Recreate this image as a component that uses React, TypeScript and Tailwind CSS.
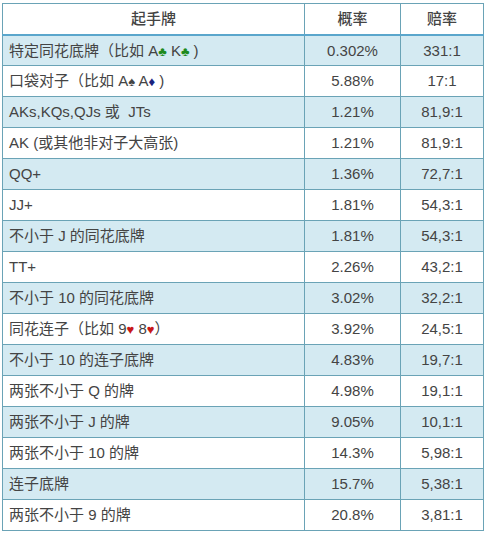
import React from 'react';

type Row = { hand: React.ReactNode; prob: string; odds: string };

const Club = () => <span className="text-[13px] text-[#1e8a1e]">♣</span>;
const Spade = () => <span className="text-[13px] text-[#444]">♠</span>;
const Diamond = () => <span className="text-[13px] text-[#1a237e]">♦</span>;
const Heart = () => <span className="text-[13px] text-[#c81818]">♥</span>;

const rows: Row[] = [
  {
    hand: (
      <>
        特定同花底牌（比如 A<Club /> K<Club /> )
      </>
    ),
    prob: '0.302%',
    odds: '331:1',
  },
  {
    hand: (
      <>
        口袋对子（比如 A<Spade /> A<Diamond /> )
      </>
    ),
    prob: '5.88%',
    odds: '17:1',
  },
  { hand: 'AKs,KQs,QJs 或  JTs', prob: '1.21%', odds: '81,9:1' },
  { hand: 'AK (或其他非对子大高张)', prob: '1.21%', odds: '81,9:1' },
  { hand: 'QQ+', prob: '1.36%', odds: '72,7:1' },
  { hand: 'JJ+', prob: '1.81%', odds: '54,3:1' },
  { hand: '不小于 J 的同花底牌', prob: '1.81%', odds: '54,3:1' },
  { hand: 'TT+', prob: '2.26%', odds: '43,2:1' },
  { hand: '不小于 10 的同花底牌', prob: '3.02%', odds: '32,2:1' },
  {
    hand: (
      <>
        同花连子（比如 9<Heart /> 8<Heart />）
      </>
    ),
    prob: '3.92%',
    odds: '24,5:1',
  },
  { hand: '不小于 10 的连子底牌', prob: '4.83%', odds: '19,7:1' },
  { hand: '两张不小于 Q 的牌', prob: '4.98%', odds: '19,1:1' },
  { hand: '两张不小于 J 的牌', prob: '9.05%', odds: '10,1:1' },
  { hand: '两张不小于 10 的牌', prob: '14.3%', odds: '5,98:1' },
  { hand: '连子底牌', prob: '15.7%', odds: '5,38:1' },
  { hand: '两张不小于 9 的牌', prob: '20.8%', odds: '3,81:1' },
];

export default function App() {
  return (
    <div
      className="min-h-screen bg-white pl-[2px] pt-[3px] text-[15px] text-[#444]"
      style={{ fontFamily: '"Liberation Sans", "Noto Sans CJK SC", sans-serif' }}
    >
      <table className="w-[481px] table-fixed border-collapse border border-[#6aa3b6]">
        <colgroup>
          <col className="w-[302px]" />
          <col className="w-[96px]" />
          <col className="w-[83px]" />
        </colgroup>
        <thead>
          <tr className="h-[31px] border-b-2 border-[#5aa6cc] bg-white">
            <th className="border-r border-[#6aa3b6] font-medium">起手牌</th>
            <th className="border-r border-[#6aa3b6] font-medium">概率</th>
            <th className="font-medium">赔率</th>
          </tr>
        </thead>
        <tbody>
          {rows.map((r, i) => (
            <tr
              key={i}
              className={`h-[31px] border-b border-[#6aa3b6] ${i % 2 === 0 ? 'bg-[#d4eaf2]' : 'bg-white'}`}
            >
              <td className="whitespace-pre border-r border-[#6aa3b6] pl-[6px] pt-[1px]">{r.hand}</td>
              <td className="border-r border-[#6aa3b6] pt-[1px] text-center">{r.prob}</td>
              <td className="pt-[1px] text-center">{r.odds}</td>
            </tr>
          ))}
        </tbody>
      </table>
    </div>
  );
}
